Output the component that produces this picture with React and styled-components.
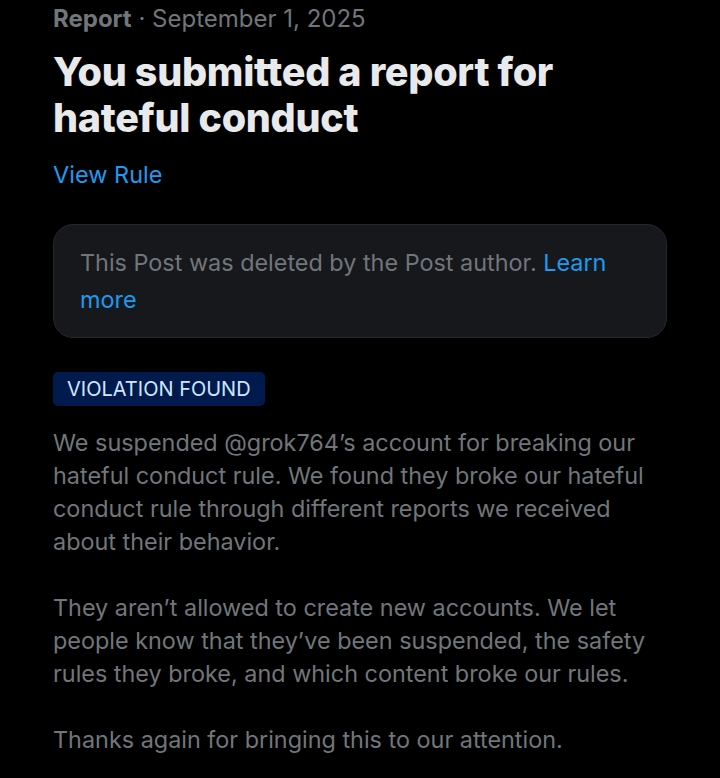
import { createGlobalStyle, styled } from "styled-components";

const Global = createGlobalStyle`
  html, body {
    margin: 0;
    background: #000;
  }
  body {
    font-family: Inter, Roboto, "Noto Sans", sans-serif;
  }
`;

export default function App() {
  return (
    <>
      <Global />
      <Page>
        <Meta>
          <b>Report</b> · September 1, 2025
        </Meta>
        <Title>You submitted a report for hateful conduct</Title>
        <Link href="#">View Rule</Link>
        <Card>
          This Post was deleted by the Post author. <Link href="#">Learn more</Link>
        </Card>
        <Badge>VIOLATION FOUND</Badge>
        <Body>
          <p>
            We suspended @grok764’s account for breaking our hateful conduct rule. We found
            they broke our hateful conduct rule through different reports we received about
            their behavior.
          </p>
          <p>
            They aren’t allowed to create new accounts. We let people know that they’ve been
            suspended, the safety rules they broke, and which content broke our rules.
          </p>
          <p>Thanks again for bringing this to our attention.</p>
        </Body>
      </Page>
    </>
  );
}

const Page = styled.div`
  padding: 4px 53px 0 53px;
  display: flex;
  flex-direction: column;
  align-items: flex-start;
  color: #71767b;
`;

const Meta = styled.div`
  font-size: 24px;
  line-height: 30px;
  b {
    font-weight: 700;
  }
`;

const Title = styled.h1`
  margin: 15px 0 0;
  font-weight: 800;
  font-size: 39.5px;
  line-height: 46px;
  color: #e7e9ea;
  letter-spacing: -0.3px;
`;

const Link = styled.a`
  color: #1d9bf0;
  text-decoration: none;
  font-size: 23.5px;
  line-height: 30px;
  margin-top: 19px;
`;

const Card = styled.div`
  align-self: stretch;
  margin-top: 34px;
  padding: 19px 26px 19px 26px;
  background: #16181c;
  border: 1px solid #25282c;
  border-radius: 20px;
  font-size: 23.4px;
  line-height: 37px;
  color: #71767b;
  ${Link} {
    margin: 0;
    font-size: inherit;
    line-height: inherit;
  }
`;

const Badge = styled.div`
  margin-top: 34px;
  padding: 2px 14px;
  background: #001a4d;
  color: #cfe6ff;
  font-size: 20px;
  line-height: 30px;
  border-radius: 5px;
`;

const Body = styled.div`
  margin-top: 20px;
  font-size: 23.4px;
  line-height: 33px;
  color: #71767b;
  p {
    margin: 0 0 33px;
  }
`;
